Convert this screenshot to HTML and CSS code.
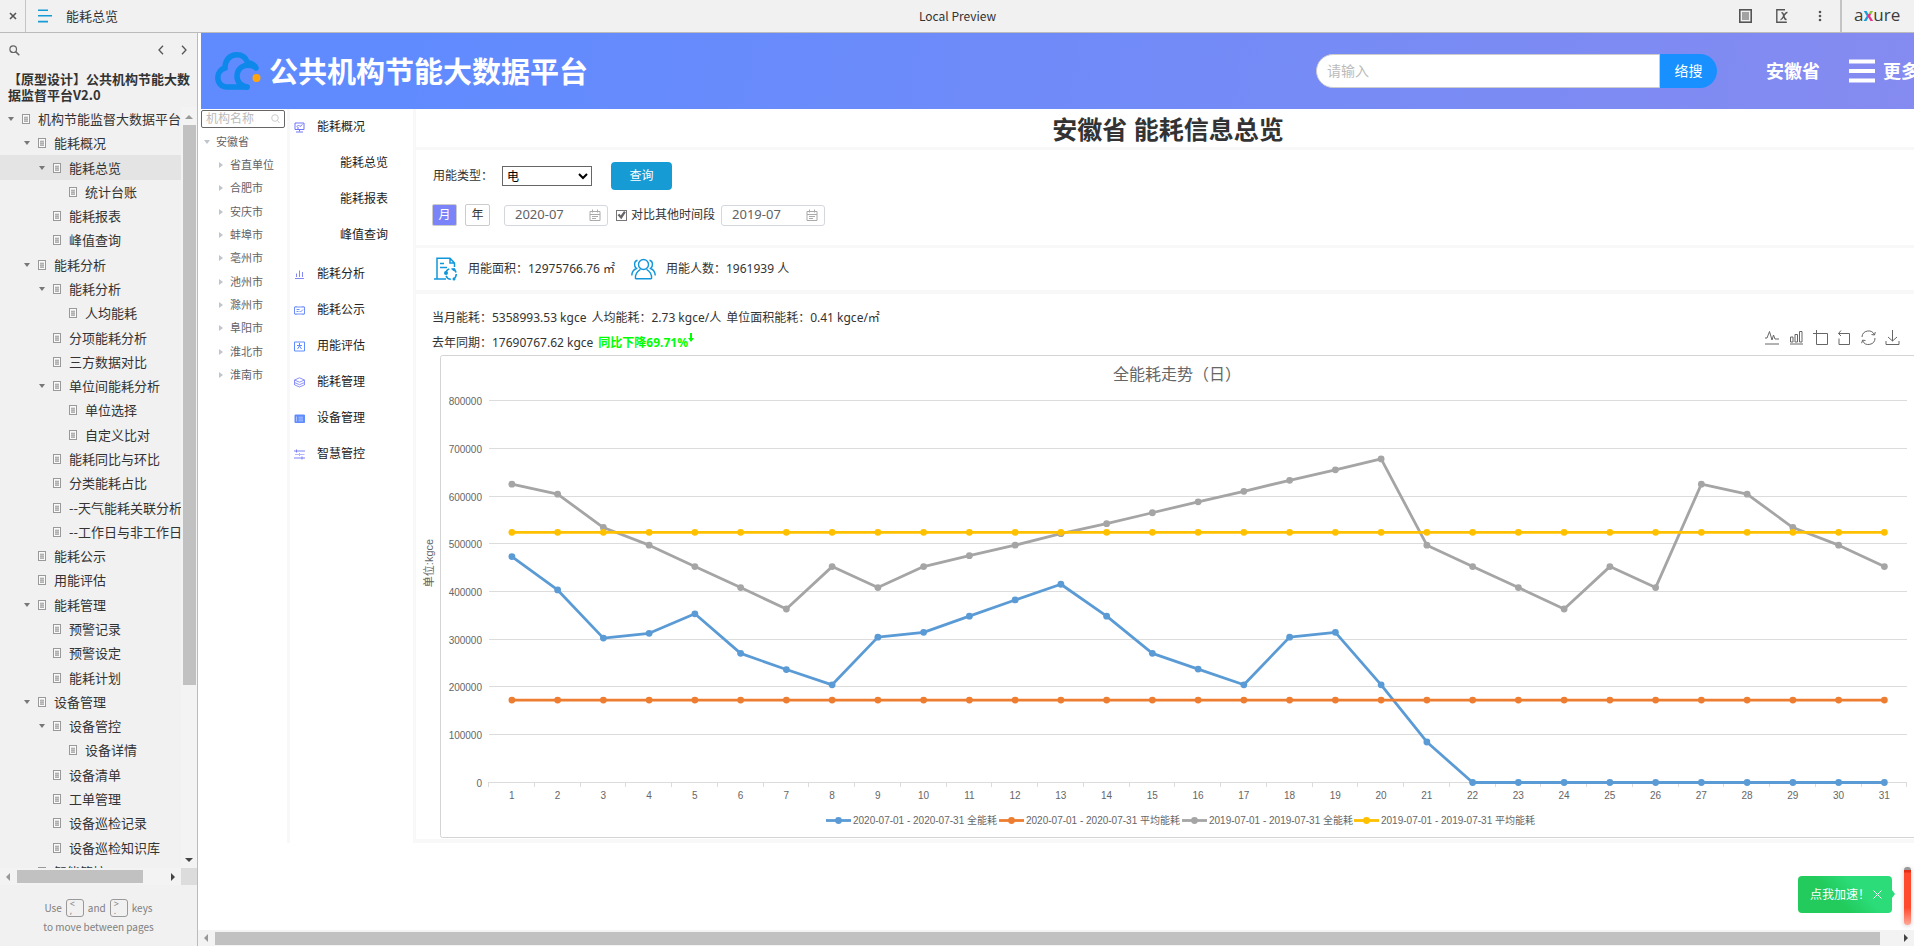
FILE: index.html
```html
<!DOCTYPE html>
<html lang="zh-CN">
<head>
<meta charset="utf-8">
<title>能耗总览</title>
<link rel="stylesheet" href="styles.css">
</head>
<body>
<svg class="defs" aria-hidden="true">
  <symbol id="page" viewBox="0 0 8 10"><rect x=".5" y=".5" width="7" height="9" fill="#fafafa" stroke="#999"/><path d="M2 2.500h4v5H2z" fill="#c4c4c4"/><path d="M2 3.500h4M2 5.500h4M2 7.500h4" stroke="#b0b0b0"/></symbol>
  <symbol id="down" viewBox="0 0 6 4"><path d="M0 0h6L3 4z" fill="currentColor"/></symbol>
  <symbol id="right" viewBox="0 0 4 6"><path d="M0 0v6L4 3z" fill="currentColor"/></symbol>
  <symbol id="cal" viewBox="0 0 12 12"><path d="M1 2.5h10v9H1zM1 5.5h10M3.5 .5v3M8.5 .5v3M3 7.5h6M3 9.5h4" fill="none" stroke="#aaa"/></symbol>
</svg>

<header class="topbar">
  <button class="close" type="button" aria-label="关闭"><svg width="8" height="8" viewBox="0 0 8 8"><path d="M1 1l6 6M7 1L1 7" stroke="#555" stroke-width="1.6"/></svg></button>
  <button class="menu" type="button" aria-label="菜单"><svg width="14" height="14" viewBox="0 0 14 14"><path d="M0 1.2h10M0 6.8h14M0 12.6h10" stroke="#169bd5" stroke-width="1.6"/></svg></button>
  <span class="page-name">能耗总览</span>
  <span class="preview">Local Preview</span>
  <div class="top-tools">
    <button type="button" aria-label="说明"><svg width="13" height="14" viewBox="0 0 13 14"><rect x=".8" y=".8" width="11.4" height="12.4" fill="none" stroke="#555" stroke-width="1.6"/><path d="M3 4h7M3 6h7M3 8h7M3 10h7" stroke="#555"/></svg></button>
    <button type="button" aria-label="变量"><svg width="13" height="14" viewBox="0 0 13 14"><path d="M9 .8H.8v12.4h10" fill="none" stroke="#555" stroke-width="1.4"/><path d="M4.500 10.500c2.500 1 3.500-7.500 7-7M5.500 3.800c2.500-1 2 7.500 5 6.500" fill="none" stroke="#555" stroke-width="1.500"/></svg></button>
    <button type="button" aria-label="更多"><svg width="4" height="12" viewBox="0 0 4 12"><circle cx="2" cy="2" r="1.300" fill="#555"/><circle cx="2" cy="6" r="1.300" fill="#555"/><circle cx="2" cy="10" r="1.300" fill="#555"/></svg></button>
  </div>
  <span class="logo">a<span class="logo-x">x</span>ure</span>
</header>

<div class="workspace">
  <aside class="sidebar">
    <div class="side-tools">
      <button type="button" aria-label="搜索"><svg width="11" height="11" viewBox="0 0 11 11"><circle cx="4.200" cy="4.200" r="3.300" fill="none" stroke="#666" stroke-width="1.200"/><path d="M6.600 6.600l3.700 3.700" stroke="#666" stroke-width="1.500"/></svg></button>
      <span class="spacer"></span>
      <button type="button" aria-label="上一页"><svg width="6" height="10" viewBox="0 0 6 10"><path d="M5 .8L1 5l4 4.200" fill="none" stroke="#555" stroke-width="1.300"/></svg></button>
      <button type="button" aria-label="下一页"><svg width="6" height="10" viewBox="0 0 6 10"><path d="M1 .8L5 5 1 9.200" fill="none" stroke="#555" stroke-width="1.300"/></svg></button>
    </div>
    <h1 class="project">【原型设计】公共机构节能大数据监督平台V2.0</h1>
    <div class="tree-frame">
      <ul class="pages">
        <li class="l0"><svg class="caret"><use href="#down"/></svg><svg class="page"><use href="#page"/></svg><a href="#">机构节能监督大数据平台</a></li>
        <li class="l1"><svg class="caret"><use href="#down"/></svg><svg class="page"><use href="#page"/></svg><a href="#">能耗概况</a></li>
        <li class="l2 current"><svg class="caret"><use href="#down"/></svg><svg class="page"><use href="#page"/></svg><a href="#">能耗总览</a></li>
        <li class="l3 leaf"><svg class="page"><use href="#page"/></svg><a href="#">统计台账</a></li>
        <li class="l2 leaf"><svg class="page"><use href="#page"/></svg><a href="#">能耗报表</a></li>
        <li class="l2 leaf"><svg class="page"><use href="#page"/></svg><a href="#">峰值查询</a></li>
        <li class="l1"><svg class="caret"><use href="#down"/></svg><svg class="page"><use href="#page"/></svg><a href="#">能耗分析</a></li>
        <li class="l2"><svg class="caret"><use href="#down"/></svg><svg class="page"><use href="#page"/></svg><a href="#">能耗分析</a></li>
        <li class="l3 leaf"><svg class="page"><use href="#page"/></svg><a href="#">人均能耗</a></li>
        <li class="l2 leaf"><svg class="page"><use href="#page"/></svg><a href="#">分项能耗分析</a></li>
        <li class="l2 leaf"><svg class="page"><use href="#page"/></svg><a href="#">三方数据对比</a></li>
        <li class="l2"><svg class="caret"><use href="#down"/></svg><svg class="page"><use href="#page"/></svg><a href="#">单位间能耗分析</a></li>
        <li class="l3 leaf"><svg class="page"><use href="#page"/></svg><a href="#">单位选择</a></li>
        <li class="l3 leaf"><svg class="page"><use href="#page"/></svg><a href="#">自定义比对</a></li>
        <li class="l2 leaf"><svg class="page"><use href="#page"/></svg><a href="#">能耗同比与环比</a></li>
        <li class="l2 leaf"><svg class="page"><use href="#page"/></svg><a href="#">分类能耗占比</a></li>
        <li class="l2 leaf"><svg class="page"><use href="#page"/></svg><a href="#">--天气能耗关联分析</a></li>
        <li class="l2 leaf"><svg class="page"><use href="#page"/></svg><a href="#">--工作日与非工作日分析</a></li>
        <li class="l1 leaf"><svg class="page"><use href="#page"/></svg><a href="#">能耗公示</a></li>
        <li class="l1 leaf"><svg class="page"><use href="#page"/></svg><a href="#">用能评估</a></li>
        <li class="l1"><svg class="caret"><use href="#down"/></svg><svg class="page"><use href="#page"/></svg><a href="#">能耗管理</a></li>
        <li class="l2 leaf"><svg class="page"><use href="#page"/></svg><a href="#">预警记录</a></li>
        <li class="l2 leaf"><svg class="page"><use href="#page"/></svg><a href="#">预警设定</a></li>
        <li class="l2 leaf"><svg class="page"><use href="#page"/></svg><a href="#">能耗计划</a></li>
        <li class="l1"><svg class="caret"><use href="#down"/></svg><svg class="page"><use href="#page"/></svg><a href="#">设备管理</a></li>
        <li class="l2"><svg class="caret"><use href="#down"/></svg><svg class="page"><use href="#page"/></svg><a href="#">设备管控</a></li>
        <li class="l3 leaf"><svg class="page"><use href="#page"/></svg><a href="#">设备详情</a></li>
        <li class="l2 leaf"><svg class="page"><use href="#page"/></svg><a href="#">设备清单</a></li>
        <li class="l2 leaf"><svg class="page"><use href="#page"/></svg><a href="#">工单管理</a></li>
        <li class="l2 leaf"><svg class="page"><use href="#page"/></svg><a href="#">设备巡检记录</a></li>
        <li class="l2 leaf"><svg class="page"><use href="#page"/></svg><a href="#">设备巡检知识库</a></li>
        <li class="l1"><svg class="caret"><use href="#down"/></svg><svg class="page"><use href="#page"/></svg><a href="#">智能管控</a></li>
      </ul>
      <div class="vscroll" aria-hidden="true">
        <svg width="8" height="4" viewBox="0 0 8 4"><path d="M0 4h8L4 0z" fill="#999"/></svg>
        <div class="vtrack"><div class="vthumb"></div></div>
        <svg width="8" height="4" viewBox="0 0 8 4"><path d="M0 0h8L4 4z" fill="#444"/></svg>
      </div>
      <div class="hscroll" aria-hidden="true">
        <svg width="4" height="8" viewBox="0 0 4 8"><path d="M4 0v8L0 4z" fill="#999"/></svg>
        <div class="htrack"><div class="hthumb side-thumb"></div></div>
        <svg width="4" height="8" viewBox="0 0 4 8"><path d="M0 0v8l4-4z" fill="#444"/></svg>
      </div>
      <div class="corner"></div>
    </div>
    <footer class="hint">
      <div class="hint-row">Use <kbd>&lt;<br>,</kbd> and <kbd>&gt;<br>.</kbd> keys</div>
      <div>to move between pages</div>
    </footer>
  </aside>

  <div class="canvas">
    <header class="banner">
      <svg class="cloud" width="46" height="38" viewBox="0 0 46 38" fill="none" stroke="#0e88eb" stroke-width="5.500" stroke-linecap="round"><path d="M32 35H12C6 35 2.800 30.500 2.800 25.500c0-5 3.400-8.500 7.200-9.500C10 8 15 2.800 21.500 2.800c5.500 0 9.500 3 11 7.700 4 .5 7 2.500 8.500 5.500"/><path d="M39 14.500c-10-4-17 2-17 10 0 5 4 10 10 10.500"/><circle cx="41.500" cy="26" r="4" fill="#ffa30f" stroke="none"/></svg>
      <span class="platform">公共机构节能大数据平台</span>
      <form class="search">
        <input type="text" aria-label="搜索内容" placeholder="请输入">
        <button type="button">络搜</button>
      </form>
      <span class="region">安徽省</span>
      <button class="more" type="button"><svg width="26" height="24" viewBox="0 0 26 24"><path d="M0 2.500h26M0 12h26M0 21.500h26" stroke="#fff" stroke-width="4"/></svg>更多</button>
    </header>

    <div class="columns">
      <section class="orgs">
        <label class="org-search"><input type="text" aria-label="机构名称" placeholder="机构名称"><svg width="9" height="10" viewBox="0 0 9 10"><circle cx="4" cy="4" r="3.300" fill="none" stroke="#ccc"/><path d="M6.500 6.500l2 2.500" stroke="#ccc"/></svg></label>
        <ul class="org-tree">
          <li class="root"><svg class="caret"><use href="#down"/></svg><span>安徽省</span></li>
          <li><svg class="arrow"><use href="#right"/></svg><span>省直单位</span></li>
          <li><svg class="arrow"><use href="#right"/></svg><span>合肥市</span></li>
          <li><svg class="arrow"><use href="#right"/></svg><span>安庆市</span></li>
          <li><svg class="arrow"><use href="#right"/></svg><span>蚌埠市</span></li>
          <li><svg class="arrow"><use href="#right"/></svg><span>亳州市</span></li>
          <li><svg class="arrow"><use href="#right"/></svg><span>池州市</span></li>
          <li><svg class="arrow"><use href="#right"/></svg><span>滁州市</span></li>
          <li><svg class="arrow"><use href="#right"/></svg><span>阜阳市</span></li>
          <li><svg class="arrow"><use href="#right"/></svg><span>淮北市</span></li>
          <li><svg class="arrow"><use href="#right"/></svg><span>淮南市</span></li>
        </ul>
      </section>

      <nav class="nav">
        <a href="#"><svg viewBox="0 0 11 11"><path d="M1 1h9v6.500H1zM2.500 5l2-2 1.500 1.500L8.500 2.500M3 6h2M5.500 7.500v2M2 10h7" stroke="#6f74f8"/></svg>能耗概况</a>
        <a class="sub" href="#">能耗总览</a>
        <a class="sub" href="#">能耗报表</a>
        <a class="sub" href="#">峰值查询</a>
        <a class="gap" href="#"><svg viewBox="0 0 11 11"><path d="M1 9.500h9M2.500 4.500v3.500M5.500 1.500V8M8.500 3v5" stroke="#8288f5"/></svg>能耗分析</a>
        <a href="#"><svg viewBox="0 0 11 11"><path d="M.5 2h10v7H.5zM2.500 4.500h3M2.500 6.500h2M5.500 6l1 1 2.500-2.500M2 1v1M9 1v1M2 9v1M9 9v1" stroke="#6f8ef8"/></svg>能耗公示</a>
        <a href="#"><svg viewBox="0 0 11 11"><path d="M.5 1h10v9H.5zM5.500 2v3M3 4.500h5M5.500 5L3.500 8M5.500 5l2 3" stroke="#5f8cff"/></svg>用能评估</a>
        <a href="#"><svg viewBox="0 0 11 11"><path d="M5.500 .8L10.500 3 5.500 5.200 .5 3zM.5 5.500l5 2.200 5-2.200M.5 7.800l5 2.200 5-2.200M.5 3v5M10.500 3v5" stroke="#8086f6" stroke-width=".9"/></svg>能耗管理</a>
        <a href="#"><svg viewBox="0 0 11 11"><path d="M1 2h9.500v7.500H1z" fill="#5f8cff" stroke="#5f8cff"/><path d="M4.500 4.200h4.500M4.500 6h4.500M4.500 7.800h4.500M2.500 3.500v5" stroke="#c8d7ff" stroke-width=".7"/></svg>设备管理</a>
        <a href="#"><svg viewBox="0 0 11 11"><path d="M0 2h11M0 9h11M2.500 .5v3M8 7.500v3" stroke="#7a80f6"/><path d="M1 5.500h9.500M5.500 4v3" stroke="#b5b8fb"/></svg>智慧管控</a>
      </nav>

      <main class="main">
        <h2 class="heading">安徽省 能耗信息总览</h2>
        <section class="filters">
          <div class="row">
            <label class="type-label" for="type">用能类型：</label>
            <select id="type"><option>电</option></select>
            <button class="query" type="button">查询</button>
          </div>
          <div class="row">
            <button class="unit on" type="button">月</button>
            <button class="unit" type="button">年</button>
            <span class="date"><input type="text" aria-label="时间" value="2020-07"><svg><use href="#cal"/></svg></span>
            <label class="compare"><input type="checkbox" checked>对比其他时间段</label>
            <span class="date"><input type="text" aria-label="对比时间" value="2019-07"><svg><use href="#cal"/></svg></span>
          </div>
        </section>
        <section class="stats">
          <svg width="24" height="24" viewBox="0 0 24 24" fill="none" stroke="#1296db" stroke-width="1.500"><path d="M3 22V1.200h13L20.500 6v4M16 1.200V6h4.500M6 6.500h4M6 10.500h7M0 22h12"/><circle cx="17" cy="17" r="5.300" stroke-dasharray="6 2.300"/><circle cx="12" cy="16" r="2" fill="#1296db" stroke="none"/><circle cx="20" cy="12.500" r="1.500" fill="#1296db" stroke="none"/><circle cx="20" cy="22" r="1.500" fill="#1296db" stroke="none"/></svg>
          <span class="stat">用能面积：12975766.76 ㎡</span>
          <svg width="25" height="22" viewBox="0 0 25 22" fill="none" stroke="#1296db" stroke-width="1.400"><circle cx="12.500" cy="6.500" r="5"/><path d="M4.500 20.800c-.8-4 2-8 5-9.500M20.500 20.800c.8-4-2-8-5-9.500M4.500 20.800h16M6.500 2.300C3 3 2.500 8 5.500 10.500 2.500 11.500 1 14 .8 17.500M18.500 2.300c3.500.7 4 5.700 1 8.200 3 1 4.500 3.500 4.700 7"/></svg>
          <span>用能人数：1961939 人</span>
        </section>
        <section class="trend">
          <div class="summary">
            <div>
              <p><span>当月能耗：5358993.53 kgce</span><span>人均能耗：2.73 kgce/人</span><span>单位面积能耗：0.41 kgce/㎡</span></p>
              <p><span>去年同期：17690767.62 kgce</span><strong>同比下降69.71%<svg width="6" height="10" viewBox="0 0 6 10"><path d="M2 0h2v5h2L3 9 0 5h2z" fill="#0f0"/></svg></strong></p>
            </div>
            <div class="toolbox">
              <svg viewBox="0 0 15 15"><path d="M0 8h2l2.500-6.500L7 10l1.500-5 1.500 4h4M0 14h14"/></svg>
              <svg viewBox="0 0 15 15"><path d="M1.500 7h2.500v5H1.500zM6 4.500h2.500V12H6zM10.500 1.500H13V12h-2.500zM1 14h13"/></svg>
              <svg viewBox="0 0 15 15"><path d="M0 3.500h2M3.500 0v14.500h11V3.500H2"/></svg>
              <svg viewBox="0 0 15 15"><path d="M4 .5L1.500 3.500 4 6M1.500 3.500h11V14.500H2V8.500"/></svg>
              <svg viewBox="0 0 15 15"><path d="M1 7A6.500 6.500 0 0 1 13.500 5M14 8A6.500 6.500 0 0 1 1.500 10.500M10.500 4.500l3 .5.800-3M4.500 10.500l-3-.3-.8 3"/></svg>
              <svg viewBox="0 0 15 15"><path d="M7.500 0v11M3 7l4.500 4L12 7M1 11v3.500h13V11"/></svg>
            </div>
          </div>
          <svg id="chart" class="chart" viewBox="0 0 1498 484" role="img" aria-label="全能耗走势（日）"></svg>
        </section>
      </main>
    </div>

    <div class="hscroll page-scroll" aria-hidden="true">
      <svg width="4" height="8" viewBox="0 0 4 8"><path d="M4 0v8L0 4z" fill="#999"/></svg>
      <div class="htrack"><div class="hthumb page-thumb"></div></div>
      <svg width="4" height="8" viewBox="0 0 4 8"><path d="M0 0v8l4-4z" fill="#444"/></svg>
    </div>
    <div class="boost"><span>点我加速！</span><button type="button" aria-label="关闭提示"><svg width="9" height="9" viewBox="0 0 9 9"><path d="M.5 .5l8 8M8.500 .5l-8 8" stroke="#fff"/></svg></button></div>
    <div class="gauge" aria-hidden="true"></div>
  </div>
</div>
<script src="chart.js"></script>
</body>
</html>
```

FILE: styles.css
```css
* { box-sizing: border-box; }

body {
  margin: 0;
  height: 100vh;
  display: flex;
  flex-direction: column;
  overflow: hidden;
  background: #fff;
  color: #333;
  font: 12px/16px "Noto Sans", "Noto Sans CJK SC", sans-serif;
}

button, input, select { font: inherit; color: inherit; margin: 0; }
button { border: 0; padding: 0; background: none; }
a { color: inherit; text-decoration: none; }
ul, p, h1, h2 { margin: 0; padding: 0; list-style: none; }
svg { display: block; flex: none; }
.defs { position: absolute; width: 0; height: 0; }

/* Preview bar */
.topbar {
  flex: none;
  height: 33px;
  display: flex;
  align-items: center;
  background: #f1f1f1;
  border-bottom: 1px solid #bbb;
  font-family: "Noto Sans CJK SC", sans-serif;
}
.close { width: 26px; height: 32px; display: grid; place-items: center; border-right: 1px solid #c4c4c4; }
.menu { margin: 0 14px 0 12px; }
.page-name { font-size: 13px; }
.preview { flex: 1; text-align: center; padding-left: 58px; }
.top-tools { display: flex; align-items: center; gap: 24px; padding-right: 18px; }
.top-tools button:last-child { margin-left: 5px; }
.logo {
  align-self: stretch;
  border-left: 2px solid #c4c4c4;
  padding: 0 12px;
  width: 74px;
  font: 17px/30px "Open Sans", sans-serif;
  color: #3c3c3c;
}
.logo-x {
  background: conic-gradient(#8bc53f 25%, #e6368b 25% 50%, #1a9cd8 50%);
  background-clip: text;
  color: transparent;
  font-weight: bold;
}

.workspace { flex: 1; min-height: 0; display: flex; }

/* Page list */
.sidebar {
  flex: none;
  width: 198px;
  display: flex;
  flex-direction: column;
  background: #f1f1f1;
  border-right: 1px solid #bbb;
  font-family: "Noto Sans CJK SC", sans-serif;
}
.side-tools { display: flex; align-items: center; gap: 17px; height: 34px; padding: 0 10px 0 9px; }
.spacer { flex: 1; }
.project { font-size: 13px; line-height: 16px; padding: 4px 4px 0 8px; height: 40px; }
.tree-frame {
  flex: 1;
  min-height: 0;
  display: grid;
  grid-template: minmax(0, 1fr) 17px / minmax(0, 1fr) 16px;
}
.pages { overflow: hidden; font-size: 13px; }
.pages li { display: flex; align-items: center; gap: 8px; height: 24px; white-space: nowrap; }
.pages li:nth-child(7n), .pages li:nth-child(7n+3) { height: 25px; }
.pages .caret { width: 6px; height: 4px; color: #777; }
.pages .page { width: 8px; height: 10px; }
.pages .l0 { padding-left: 8px; }
.pages .l1 { padding-left: 24px; }
.pages .l2 { padding-left: 39px; }
.pages .l3 { padding-left: 55px; }
.leaf .page { margin-left: 14px; }
.current { background: #e4e4e4; }
.vscroll { display: flex; flex-direction: column; align-items: center; padding: 8px 0 6px; background: #f3f3f3; }
.vtrack { flex: 1; width: 13px; padding: 6px 0; }
.vthumb { height: 77%; background: #c1c1c1; }
.hscroll { display: flex; align-items: center; padding: 0 6px; background: #f3f3f3; }
.htrack { flex: 1; padding: 0 7px; }
.hthumb { height: 13px; background: #c1c1c1; }
.side-thumb { width: 86%; }
.corner { background: #dcdcdc; }
.hint { height: 61px; padding-top: 12px; text-align: center; color: #808080; font-size: 10px; }
.hint-row { display: flex; justify-content: center; align-items: center; gap: 4px; height: 22px; }
.hint kbd {
  width: 18px;
  height: 18px;
  padding-left: 3px;
  border: 1px solid #999;
  border-radius: 3px;
  font: 9px/7px "Noto Sans", sans-serif;
  text-align: left;
}

/* Prototype canvas */
.canvas { position: relative; flex: 1; min-width: 0; padding-left: 3px; display: flex; flex-direction: column; }
.banner {
  flex: none;
  display: flex;
  align-items: center;
  height: 76px;
  padding-left: 14px;
  overflow: hidden;
  background: linear-gradient(100deg, #5f8bff 10%, #858bf0);
  color: #fff;
  white-space: nowrap;
}
.platform { margin-left: 8px; padding-top: 2px; font-size: 29px; line-height: 40px; font-weight: bold; }
.search { display: flex; margin-left: auto; height: 34px; width: 401px; font-size: 14px; }
.search input {
  flex: 1;
  min-width: 0;
  padding: 0 10px;
  border: 1px solid #ccc;
  border-radius: 17px 0 0 17px;
  background: #fff;
  color: #333;
}
.search button { width: 57px; border-radius: 0 17px 17px 0; background: #1890ff; }
::placeholder { color: #bbb; opacity: 1; }
.region { margin: 0 29px 0 49px; font-size: 18px; font-weight: bold; }
.more { display: flex; align-items: center; gap: 8px; margin-right: -5px; font-size: 18px; font-weight: bold; }

.columns { flex: 1; min-height: 0; display: flex; align-items: flex-start; }
.orgs { flex: none; width: 89px; align-self: stretch; max-height: 734px; border-right: 3px solid #f8f8f8; padding-top: 1px; color: #606266; }
.org-search { display: flex; align-items: center; width: 84px; height: 18px; padding: 0 4px; border: 1px solid #666; border-radius: 2px; }
.org-search input { flex: 1; min-width: 0; border: 0; padding: 0; height: 16px; background: none; }
.org-tree { padding-top: 2px; font-size: 11px; }
.org-tree li { display: flex; align-items: center; gap: 7px; height: 23px; padding-left: 18px; }
.org-tree li:nth-child(3n) { height: 24px; }
.org-tree .root { padding-left: 3px; gap: 6px; }
.org-tree .caret { width: 6px; height: 4px; color: #c0c4cc; }
.org-tree .arrow { width: 4px; height: 6px; color: #c0c4cc; }

.nav { flex: none; width: 126px; align-self: stretch; max-height: 734px; border-right: 3px solid #f8f8f8; }
.nav a { display: flex; align-items: center; gap: 12px; height: 36px; padding-left: 4px; color: #222; }
.nav svg { width: 11px; height: 11px; fill: none; stroke-width: 1; }
.nav .sub { padding-left: 50px; }
.nav .gap { margin-top: 3px; }

.main { flex: 1; min-width: 0; }
.heading { height: 41px; border-bottom: 3px solid #f8f8f8; text-align: center; font-size: 25px; line-height: 40px; padding-left: 6px; }
.filters { display: flex; flex-direction: column; gap: 14px; padding: 12px 16px 19px; border-bottom: 3px solid #f8f8f8; }
.row { display: flex; align-items: center; height: 28px; }
.row + .row { height: 22px; }
.type-label { width: 70px; padding-left: 1px; }
.type-label + select { width: 90px; height: 20px; margin-right: 19px; border: 1px solid #666; border-radius: 0; background: #fff; color: #000; }
.query { width: 61px; height: 28px; border-radius: 4px; background: #169bd5; color: #fff; }
.unit { width: 25px; height: 22px; margin-right: 8px; border: 1px solid #ccc; border-radius: 2px; }
.unit + .unit { margin-right: 14px; }
.unit.on { background: #7b83f9; color: #fff; }
.date { display: flex; align-items: center; width: 104px; height: 21px; padding: 0 6px 0 10px; border: 1px solid #d4d7de; border-radius: 3px; }
.date input { flex: 1; min-width: 0; padding: 0 0 2px; border: 0; height: 18px; background: none; font-size: 13px; color: #606266; }
.date svg { width: 12px; height: 12px; }
.compare { display: flex; align-items: center; gap: 4px; margin: 0 6px 0 8px; }
.compare input { appearance: none; width: 11px; height: 11px; border: 1px solid #767676; }
.compare input:checked::after {
  content: "";
  display: block;
  height: 9px;
  background: #666;
  clip-path: polygon(5% 50%, 28% 35%, 42% 55%, 78% 5%, 98% 20%, 48% 98%);
}
.stats { display: flex; align-items: center; height: 46px; padding: 0 18px 1px; border-bottom: 4px solid #f8f8f8; }
.stats span { margin-left: 10px; }
.stats .stat { margin-right: 16px; }
.trend { padding-top: 11px; border-bottom: 4px solid #f8f8f8; }
.summary { display: flex; justify-content: space-between; align-items: flex-end; padding: 0 14px 0 16px; line-height: 25px; }
.summary p { display: flex; gap: 5px; }
.summary strong { color: #0f0; }
.summary strong svg { display: inline-block; vertical-align: 4px; }
.toolbox { display: flex; gap: 9px; padding-bottom: 10px; }
.toolbox svg { width: 15px; height: 15px; fill: none; stroke: #666; stroke-width: 1; }
.chart { width: 100%; height: auto; }
.chart text { font: 10px "Liberation Sans", "Noto Sans CJK SC", sans-serif; fill: #666; }
.chart .title { font-size: 16px; }
.chart .unit-name { font-size: 11px; }
.middle { text-anchor: middle; }
.end { text-anchor: end; }

.page-scroll { flex: none; height: 16px; margin-left: -3px; }
.page-thumb { width: 99%; }

.boost {
  position: absolute;
  right: 22px;
  bottom: 33px;
  display: flex;
  align-items: center;
  justify-content: space-between;
  width: 94px;
  height: 37px;
  padding: 0 10px 0 12px;
  border-radius: 4px;
  background: linear-gradient(45deg, #22cb5c 40%, #2bdc78 65%);
  color: #fff;
  white-space: nowrap;
}
.boost::after {
  content: "";
  position: absolute;
  right: -3px;
  top: 14px;
  width: 3px;
  height: 8px;
  background: #2bdc78;
  clip-path: polygon(0 0, 100% 50%, 0 100%);
}
.boost span { width: 58px; }
.gauge {
  position: absolute;
  right: 3px;
  bottom: 21px;
  width: 7px;
  height: 58px;
  border-radius: 3px;
  background: linear-gradient(#999 3px, #e03018 3px 5px, #ff4a2d 6px 70%, #ffa898);
  box-shadow: 0 1px 5px #ccc;
}
```

FILE: chart.js
```js
(function () {
  var NS = "http://www.w3.org/2000/svg";
  var svg = document.getElementById("chart");
  var left = 73, step = 45.75, zero = 427.5, unit = 47.66;

  function add(tag, attrs, text) {
    var el = document.createElementNS(NS, tag);
    for (var key in attrs) el.setAttribute(key, attrs[key]);
    if (text) el.textContent = text;
    svg.appendChild(el);
  }
  function repeat(value) {
    return Array(31).fill(value);
  }

  // Values in units of 100000 kgce, one per day of the month
  var series = [
    { name: "2020-07-01 - 2020-07-31 全能耗", color: "#5b9bd5", x: 410,
      data: [4.74, 4.04, 3.03, 3.13, 3.54, 2.71, 2.37, 2.05, 3.05, 3.15, 3.49, 3.83, 4.16, 3.49, 2.71, 2.38, 2.05, 3.05, 3.15, 2.05, 0.85, 0, 0, 0, 0, 0, 0, 0, 0, 0, 0] },
    { name: "2020-07-01 - 2020-07-31 平均能耗", color: "#ed7d31", x: 583, data: repeat(1.73) },
    { name: "2019-07-01 - 2019-07-31 全能耗", color: "#a5a5a5", x: 766,
      data: [6.26, 6.05, 5.35, 4.98, 4.53, 4.09, 3.64, 4.53, 4.09, 4.53, 4.76, 4.98, 5.22, 5.43, 5.66, 5.89, 6.11, 6.34, 6.56, 6.79, 4.98, 4.53, 4.09, 3.64, 4.53, 4.09, 6.26, 6.05, 5.35, 4.98, 4.53] },
    { name: "2019-07-01 - 2019-07-31 平均能耗", color: "#ffc000", x: 938, data: repeat(5.25) }
  ];

  add("path", { d: "M1498 .5H26.5a2 2 0 0 0-2 2V480.500a2 2 0 0 0 2 2H1498", fill: "none", stroke: "#d4d4d4" });
  add("text", { x: 697, y: 25, "class": "title" }, "全能耗走势（日）");
  add("text", { transform: "translate(17 208) rotate(-90)", "class": "unit-name middle" }, "单位:kgce");

  for (var v = 0; v <= 8; v++) {
    var gy = Math.round(zero - v * unit) - 0.5;
    add("path", { d: "M" + left + " " + gy + "H1491", stroke: "#dcdcdc" });
    add("text", { x: 66, y: gy + 4, "class": "end" }, v ? v + "00000" : "0");
  }
  for (var t = 0; t <= 31; t++) {
    add("path", { d: "M" + (Math.round(left + t * step) - 0.5) + " 427v5", stroke: "#dcdcdc" });
    if (t) add("text", { x: left + (t - 0.5) * step, y: 444, "class": "middle" }, String(t));
  }

  series.forEach(function (s) {
    var points = s.data.map(function (value, i) {
      return [left + (i + 0.5) * step, zero - value * unit];
    });
    add("polyline", { points: points.join(" "), fill: "none", stroke: s.color, "stroke-width": 2.8, "stroke-linejoin": "round" });
    points.forEach(function (p) {
      add("circle", { cx: p[0], cy: p[1], r: 3.4, fill: s.color });
    });
    add("path", { d: "M" + s.x + " 465.500h25", stroke: s.color, "stroke-width": 2.8 });
    add("circle", { cx: s.x + 12.5, cy: 465.5, r: 3.4, fill: s.color });
    add("text", { x: s.x + 27, y: 469 }, s.name);
  });
})();
```
